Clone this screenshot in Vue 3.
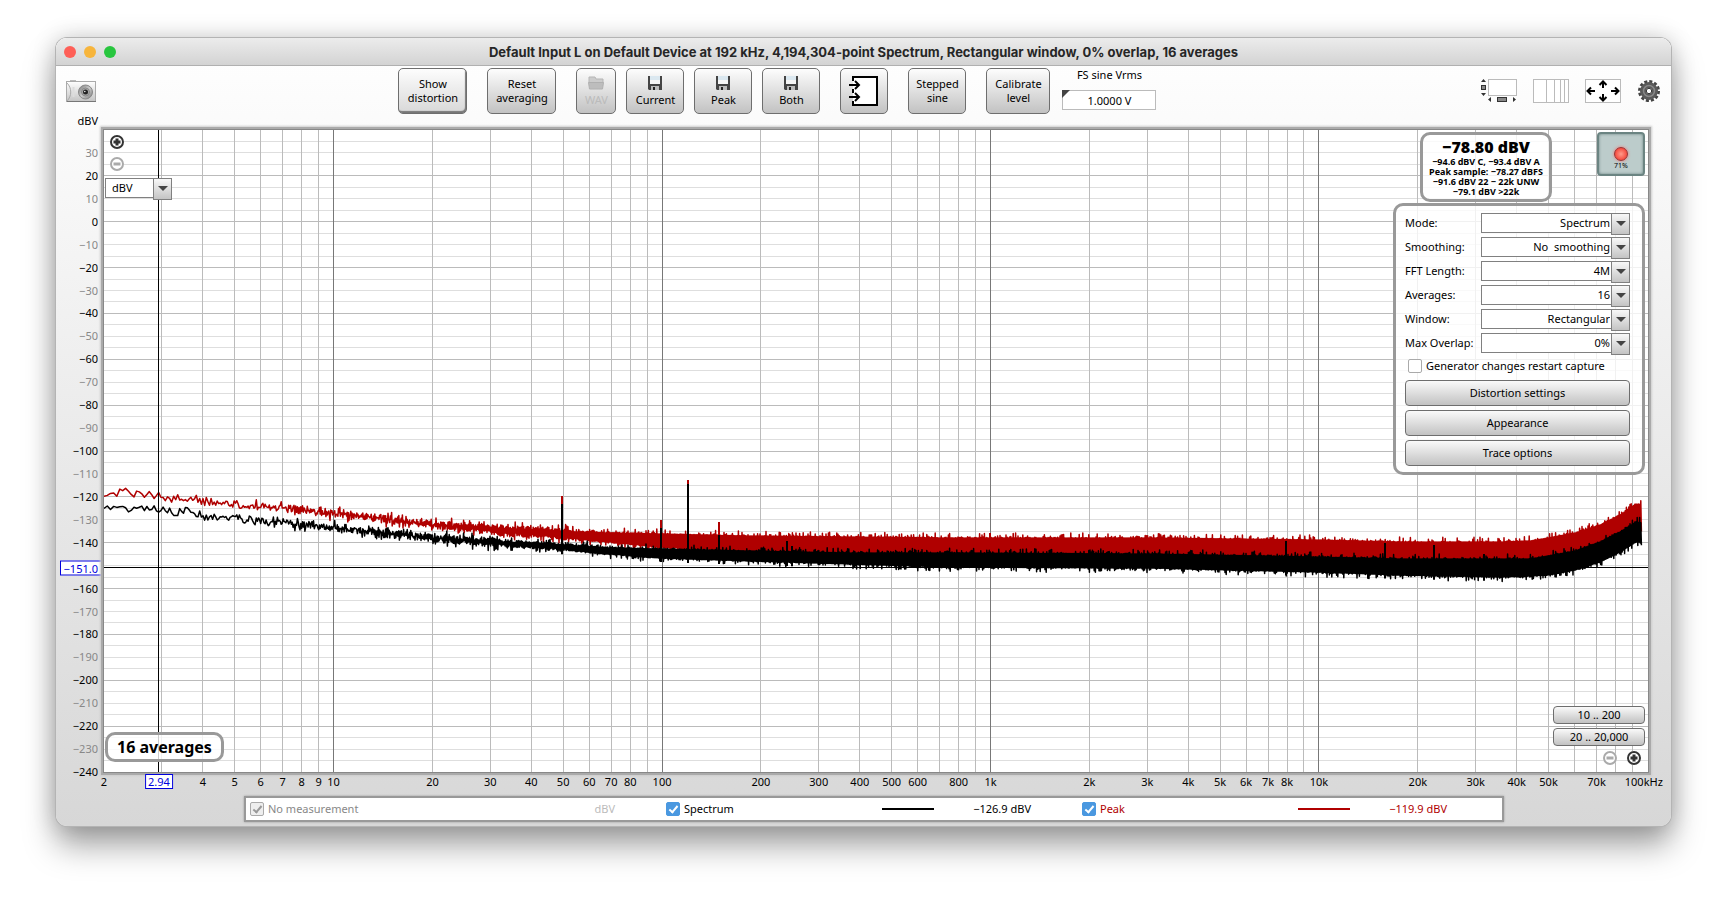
<script setup>
  import { reactive, ref } from 'vue'

  // plot ranges
  const fMin = 2
  const fMax = 100400
  const dbMax = 40
  const dbMin = -240

  const xPos = (f) => (Math.log10(f / fMin) / Math.log10(fMax / fMin)) * 100 + '%'
  const yPos = (db) => ((dbMax - db) / (dbMax - dbMin)) * 100 + '%'

  const cursor = { f: 2.94, db: -151 }

  const hLines = []
  for (let db = dbMax - 5; db > dbMin; db -= 5) {
    hLines.push({ db, major: db % 20 === 0 })
  }

  const vLines = []
  for (let decade = 1; decade <= 10000; decade *= 10) {
    for (let n = 1; n < 10; n++) {
      const f = n * decade
      if (f > fMin) vLines.push({ f, major: n === 1 })
    }
  }

  const yLabels = []
  for (let db = 30; db >= dbMin; db -= 10) {
    if (db !== -150) {
      yLabels.push({ db, text: String(db).replace('-', '−'), minor: db % 20 !== 0 })
    }
  }

  const xLabels = [
    2, 4, 5, 6, 7, 8, 9, 10, 20, 30, 40, 50, 60, 70, 80, 100, 200, 300, 400, 500, 600, 800, 1000,
    2000, 3000, 4000, 5000, 6000, 7000, 8000, 10000, 20000, 30000, 40000, 50000, 70000,
  ].map((f) => ({ f, text: f >= 1000 ? f / 1000 + 'k' : String(f) }))
  xLabels.push({ f: 97500, text: '100kHz' })

  // noise envelopes: x, peak top, peak bottom, spectrum top, spectrum bottom
  const envelope = [
    [0, 354, 367, 371, 380],
    [56, 362, 370, 375, 384],
    [96, 367, 375, 380, 390],
    [146, 371, 380, 386, 394],
    [229, 378, 388, 393, 402],
    [329, 390, 400, 403, 413],
    [396, 394, 406, 408, 418],
    [456, 398, 410, 412, 421],
    [496, 401, 413, 416, 425],
    [557, 403, 418, 418, 429],
    [646, 405, 422, 420, 432],
    [746, 406, 425, 422, 435],
    [846, 407, 426, 422, 438],
    [1046, 407, 426, 423, 439],
    [1214, 409, 429, 426, 443],
    [1296, 411, 430, 428, 446],
    [1396, 411, 431, 428, 448],
    [1426, 410, 430, 428, 447],
    [1444, 407, 428, 425, 446],
    [1471, 402, 423, 420, 441],
    [1496, 394, 414, 411, 433],
    [1516, 384, 404, 401, 423],
    [1532, 373, 395, 391, 413],
    [1538, 374, 398, 392, 413],
  ]
  const peakSpikes = [[458, 366], [557, 390], [584, 350], [615, 392], [886, 403]]
  const spectrumSpikes = [
    [458, 374], [557, 398], [584, 354], [615, 405], [683, 411], [688, 416],
    [1182, 411], [1281, 413], [1330, 415], [1380, 424],
  ]

  const level = (x, col) => {
    let i = 1
    while (i < envelope.length - 1 && envelope[i][0] < x) i++
    const a = envelope[i - 1]
    const b = envelope[i]
    return a[col] + ((b[col] - a[col]) * (x - a[0])) / (b[0] - a[0])
  }

  const trace = (top, bottom, seed) => {
    let s = seed
    const random = () => {
      s = (s * 16807) % 2147483647
      return s / 2147483647
    }
    let d = ''
    let up = false
    for (let x = 0; x <= 1538; ) {
      const hi = level(x, top)
      const lo = level(x, bottom)
      // the band fills in as more bins share a pixel
      const fill = Math.min(1, Math.max(0, (x - 100) / 450))
      const inward = random() * (1 - fill) * (lo - hi) * 0.9
      const outward = Math.pow(random(), 5) * 5 - 1
      const y = up ? hi + inward - outward : lo - inward + outward
      up = x > 100 ? !up : random() > 0.5
      d += (d ? 'L' : 'M') + x.toFixed(1) + ' ' + y.toFixed(1)
      // bins get closer together on the log axis
      x += Math.max(0.6, 3.3 * Math.pow(10, -x / 328))
    }
    return d
  }

  const peakPath = trace(1, 2, 4217)
  const spectrumPath = trace(3, 4, 9931)
  const spikePath = (spikes, col) =>
    spikes.map(([x, y]) => `M${x} ${level(x, col) + 3}V${y}`).join('')

  const settings = reactive([
    { label: 'Mode:', id: 'mode', value: 'Spectrum' },
    { label: 'Smoothing:', id: 'smoothing', value: 'No \u00a0smoothing' },
    { label: 'FFT Length:', id: 'fft', value: '4M' },
    { label: 'Averages:', id: 'averages', value: '16' },
    { label: 'Window:', id: 'window', value: 'Rectangular' },
    { label: 'Max Overlap:', id: 'overlap', value: '0%' },
  ])
  const restart = ref(false)
  const fsLevel = ref('1.0000 V')

  const legend = reactive([
    { name: 'No measurement', value: 'dBV', kind: 'none', on: true },
    { name: 'Spectrum', value: '−126.9 dBV', kind: 'spectrum', on: true },
    { name: 'Peak', value: '−119.9 dBV', kind: 'peak', on: true },
  ])
</script>

<template>
  <main class="window">
    <header class="titlebar">
      <div class="lights"><i class="close"></i><i class="minimize"></i><i class="zoom"></i></div>
      <h1>
        Default Input L on Default Device at 192 kHz, 4,194,304-point Spectrum, Rectangular window,
        0% overlap, 16 averages
      </h1>
    </header>

    <div class="toolbar">
      <button class="icon-button camera" aria-label="Capture image">
        <svg width="30" height="22" viewBox="0 0 30 22">
          <defs>
            <linearGradient id="body" x2="0" y2="1">
              <stop offset="0" stop-color="#fff" />
              <stop offset="1" stop-color="#c4c4c4" />
            </linearGradient>
            <linearGradient id="lens" x2="1" y2="1">
              <stop offset="0" stop-color="#777" />
              <stop offset="0.5" stop-color="#ccc" />
              <stop offset="1" stop-color="#777" />
            </linearGradient>
          </defs>
          <rect x="4" y="0" width="6" height="3" fill="#bbb" />
          <rect x="0.5" y="1.5" width="29" height="20" fill="url(#body)" stroke="#aaa" />
          <path d="M1 3c5 5 5 13 0 18" fill="none" stroke="#aaa" />
          <path d="M7.500 7v10" fill="none" stroke="#ddd" stroke-width="2" />
          <path d="M1 21.5h29" stroke="#777" />
          <circle cx="19.500" cy="12" r="7" fill="url(#lens)" stroke="#888" />
          <circle cx="19.500" cy="12" r="4" fill="#aaa" stroke="#888" />
          <circle cx="19.500" cy="12" r="2.500" fill="#222" />
          <circle cx="18.800" cy="11.500" r="0.800" fill="#eee" />
        </svg>
      </button>
      <div class="space left"></div>
      <button class="tool wide raised">Show<br />distortion</button>
      <button class="tool wide group">Reset<br />averaging</button>
      <button class="tool narrow group" disabled>
        <svg width="16" height="14" viewBox="0 0 16 14">
          <path d="M1 7V1h6l1 2h7v4" fill="#ccc" stroke="#b5b5b5" />
          <path d="M0.500 6.500h15l-1 6.500h-13z" fill="#bdbdbd" stroke="#b0b0b0" />
        </svg>
        WAV
      </button>
      <button v-for="name in ['Current', 'Peak', 'Both']" :key="name" class="tool save">
        <svg width="14" height="14" viewBox="0 0 14 14">
          <path d="M0 0h14v14H1l-1-1z" fill="#444" />
          <path d="M2 0h10v8H2z" fill="#dbe8f0" />
          <path d="M2 4h10v4H2z" fill="#f6f6f6" />
          <path d="M3 10h8v4H3z" fill="#bbb" />
          <path d="M5 11h2v3H5z" fill="#222" />
        </svg>
        {{ name }}
      </button>
      <button class="tool inputs group" aria-label="Inputs">
        <svg width="30" height="32" viewBox="0 0 30 32">
          <path d="M4 1.500h24.500v28H4z" fill="#fff" />
          <path d="M4 6V2h24v28H4v-4M4 14v4" fill="none" stroke="#000" stroke-width="2" />
          <path
            d="M0 10h10M6 6l4 4-4 4M0 22h10M6 18l4 4-4 4"
            fill="none"
            stroke="#000"
            stroke-width="2"
          />
        </svg>
      </button>
      <button class="tool stepped group">Stepped<br />sine</button>
      <button class="tool calibrate group">Calibrate<br />level</button>
      <div class="fs">
        <label for="fs">FS sine Vrms</label>
        <div class="fs-field"><input id="fs" v-model="fsLevel" type="text" /></div>
      </div>
      <div class="space right"></div>
      <div class="view-buttons">
        <button class="icon-button" aria-label="Scrollbars">
          <svg width="37" height="24" viewBox="0 0 37 24">
            <rect x="8.500" y="0.500" width="28" height="16" fill="#fff" stroke="#bbb" />
            <rect x="1.500" y="6.500" width="4" height="4" fill="#888" stroke="#333" />
            <rect x="17.500" y="18.500" width="9" height="4" fill="#888" stroke="#333" />
            <path
              d="M1 3h5L3.500 0zM1 14h5l-2.500 3zM11 18v5l-3-2.500zM33 18v5l3-2.500z"
              fill="#333"
            />
          </svg>
        </button>
        <button class="icon-button" aria-label="Frequency axis">
          <svg width="36" height="24" viewBox="0 0 36 24">
            <rect x="0.500" y="0.500" width="35" height="23" fill="#fff" stroke="#bbb" />
            <path d="M13.500 0v24M21.500 0v24M27.500 0v24M31.500 0v24" stroke="#bbb" />
          </svg>
        </button>
        <button class="icon-button" aria-label="Graph limits">
          <svg width="36" height="24" viewBox="0 0 36 24">
            <rect x="0.500" y="0.500" width="35" height="23" fill="#fff" stroke="#bbb" />
            <path
              d="M3 12h7M6 8.500L2.500 12 6 15.500M33 12h-7M30 8.500l3.500 3.500-3.500 3.500M18 3v6M14.500 6L18 2.500 21.500 6M18 21v-6M14.500 18l3.500 3.500 3.500-3.500"
              fill="none"
              stroke="#000"
              stroke-width="2"
            />
          </svg>
        </button>
        <button class="icon-button" aria-label="Settings">
          <svg width="24" height="24" viewBox="-12 -12 24 24">
            <circle r="9.500" fill="none" stroke="#444" stroke-width="3" stroke-dasharray="3 1.970" />
            <circle r="6" fill="none" stroke="#5a5a5a" stroke-width="6" />
            <circle r="5.500" fill="none" stroke="#888" stroke-width="1.500" />
            <circle r="2.700" fill="#fff" stroke="#333" />
          </svg>
        </button>
      </div>
    </div>

    <div class="graph">
      <div class="y-axis">
        <span class="unit">dBV</span>
        <span
          v-for="label in yLabels"
          :key="label.db"
          class="y-label"
          :class="{ minor: label.minor }"
          :style="{ top: yPos(label.db) }"
          >{{ label.text }}</span
        >
        <span class="y-cursor" :style="{ top: yPos(cursor.db) }">−151.0</span>
      </div>

      <div class="plot">
        <svg class="lines" width="100%" height="100%">
          <line
            v-for="line in hLines"
            :key="'h' + line.db"
            x1="0"
            x2="100%"
            :y1="yPos(line.db)"
            :y2="yPos(line.db)"
            :class="line.major ? 'mid' : 'light'"
          />
          <line
            v-for="line in vLines"
            :key="'v' + line.f"
            y1="0"
            y2="100%"
            :x1="xPos(line.f)"
            :x2="xPos(line.f)"
            :class="line.major ? 'dark' : 'mid'"
          />
          <svg width="100%" height="100%" viewBox="0 0 1544 642" preserveAspectRatio="none">
            <path class="peak" :d="peakPath" />
            <path class="peak spike" :d="spikePath(peakSpikes, 2)" />
            <path class="spectrum" :d="spectrumPath" />
            <path class="spectrum spike" :d="spikePath(spectrumSpikes, 4)" />
          </svg>
          <line x1="0" x2="100%" :y1="yPos(cursor.db)" :y2="yPos(cursor.db)" class="cursor" />
          <line y1="0" y2="100%" :x1="xPos(cursor.f)" :x2="xPos(cursor.f)" class="cursor" />
        </svg>

        <div class="top-left">
          <button class="round" aria-label="Zoom in vertically">
            <svg width="14" height="14" viewBox="0 0 14 14">
              <circle cx="7" cy="7" r="6" />
              <path d="M3.500 7h7M7 3.500v7" />
            </svg>
          </button>
          <button class="round off" aria-label="Zoom out vertically">
            <svg width="14" height="14" viewBox="0 0 14 14">
              <circle cx="7" cy="7" r="6" />
              <path d="M3.500 7h7" />
            </svg>
          </button>
          <span class="drop unit-drop">
            <select aria-label="Y axis unit">
              <option>dBV</option>
            </select>
          </span>
        </div>

        <div class="averages box">16 averages</div>

        <div class="readout box">
          <strong>−78.80 dBV</strong>
          <span>−94.6 dBV C, −93.4 dBV A</span>
          <span>Peak sample: −78.27 dBFS</span>
          <span>−91.6 dBV 22 − 22k UNW</span>
          <span>−79.1 dBV &gt;22k</span>
        </div>

        <button class="record"><i></i>71%</button>

        <form class="settings box" @submit.prevent>
          <div v-for="item in settings" :key="item.id" class="row">
            <label :for="item.id">{{ item.label }}</label>
            <span class="drop">
              <select :id="item.id" v-model="item.value">
                <option>{{ item.value }}</option>
              </select>
            </span>
          </div>
          <label class="restart">
            <input v-model="restart" type="checkbox" />
            Generator changes restart capture
          </label>
          <button class="wide-button">Distortion settings</button>
          <button class="wide-button">Appearance</button>
          <button class="wide-button">Trace options</button>
        </form>

        <div class="ranges">
          <button class="range">10 .. 200</button>
          <button class="range">20 .. 20,000</button>
          <div class="range-zoom">
            <button class="round off" aria-label="Zoom out">
              <svg width="14" height="14" viewBox="0 0 14 14">
                <circle cx="7" cy="7" r="6" />
                <path d="M3.500 7h7" />
              </svg>
            </button>
            <button class="round" aria-label="Zoom in">
              <svg width="14" height="14" viewBox="0 0 14 14">
                <circle cx="7" cy="7" r="6" />
                <path d="M3.500 7h7M7 3.500v7" />
              </svg>
            </button>
          </div>
        </div>
      </div>
    </div>

    <div class="x-axis">
      <span
        v-for="label in xLabels"
        :key="label.f"
        class="x-label"
        :style="{ left: xPos(label.f) }"
        >{{ label.text }}</span
      >
      <span class="x-cursor" :style="{ left: xPos(cursor.f) }">2.94</span>
    </div>

    <div class="legend">
      <div v-for="item in legend" :key="item.name" class="entry" :class="item.kind">
        <label>
          <input v-model="item.on" type="checkbox" :disabled="item.kind === 'none'" />
          {{ item.name }}
        </label>
        <i class="swatch"></i>
        <span class="value">{{ item.value }}</span>
      </div>
    </div>
  </main>
</template>

<style>
  body {
    margin: 0;
    background-color: #fff;
  }
  #app {
    display: flex;
    min-height: 100vh;
    box-sizing: border-box;
    padding: 38px 56px 74px;
  }
</style>

<style scoped>
  * {
    box-sizing: border-box;
  }
  .window,
  button,
  input,
  select {
    font-family: 'Noto Sans', 'Open Sans', sans-serif;
    font-size: 11px;
    line-height: 14px;
    color: #000;
  }
  .window {
    flex: 1;
    min-width: 0;
    display: flex;
    flex-direction: column;
    border-radius: 11px;
    background: linear-gradient(#fff, #d7d7d7);
    box-shadow:
      0 0 0 1px #b4b4b4,
      0 0 24px rgba(0, 0, 0, 0.2),
      0 20px 32px rgba(0, 0, 0, 0.35);
  }

  .titlebar {
    display: flex;
    align-items: center;
    height: 28px;
    padding: 0 8px;
    border-bottom: 1px solid #b0b0b0;
    border-radius: 11px 11px 0 0;
    background: linear-gradient(#ececec, #d3d3d3);
  }
  .titlebar h1 {
    flex: 1;
    margin: 0 60px 0 0;
    text-align: center;
    white-space: nowrap;
    font: bold 13px/16px Inter, sans-serif;
    color: #262626;
  }
  .lights {
    display: flex;
    gap: 8px;
    width: 60px;
  }
  .lights i {
    width: 12px;
    height: 12px;
    border-radius: 50%;
  }
  .close {
    background-color: #fe5f57;
  }
  .minimize {
    background-color: #f7b53c;
  }
  .zoom {
    background-color: #28c63f;
  }

  .toolbar {
    display: flex;
    align-items: flex-start;
    height: 61px;
    padding: 2px 10px 0;
  }
  .space.left {
    flex: 302;
  }
  .space.right {
    flex: 323;
  }
  .icon-button {
    display: flex;
    padding: 0;
    border: 0;
    background: none;
  }
  .camera {
    margin-top: 12px;
  }
  .tool {
    display: flex;
    flex-direction: column;
    align-items: center;
    justify-content: center;
    gap: 3px;
    height: 46px;
    margin-left: 10px;
    padding: 0;
    border: 1px solid #6e6e6e;
    border-radius: 5px;
    background: linear-gradient(#fdfdfd, #c2c2c2);
  }
  .group {
    margin-left: 20px;
  }
  .wide {
    display: block;
    width: 69px;
  }
  .raised {
    margin-left: 0;
    background: linear-gradient(#fdfdfd, #d8d8d8);
    box-shadow: inset -1px -2px 1px #777;
  }
  .narrow {
    width: 40px;
  }
  .save,
  .stepped {
    width: 58px;
  }
  .inputs {
    width: 48px;
  }
  .stepped,
  .calibrate {
    display: block;
  }
  .calibrate {
    width: 64px;
  }
  .tool:disabled {
    color: #bbb;
  }
  .fs {
    display: flex;
    flex-direction: column;
    align-items: center;
    gap: 8px;
    width: 94px;
    margin-left: 12px;
  }
  .fs-field {
    position: relative;
  }
  .fs-field::before {
    content: '';
    position: absolute;
    border: 4px solid #444;
    border-right-color: transparent;
    border-bottom-color: transparent;
  }
  .fs-field input {
    display: block;
    width: 94px;
    height: 20px;
    padding: 0;
    border: 1px solid #bbb;
    background: #fff;
    text-align: center;
  }
  .view-buttons {
    display: flex;
    gap: 16px;
    margin-top: 11px;
  }

  .graph {
    flex: 1;
    display: flex;
    min-height: 480px;
    padding-right: 23px;
  }
  .y-axis {
    position: relative;
    width: 48px;
    margin: 3px 0;
  }
  .y-axis span {
    position: absolute;
    right: 6px;
    transform: translateY(-50%);
  }
  .y-axis .unit {
    top: -9px;
  }
  .minor {
    color: #888;
  }
  .y-axis .y-cursor {
    right: 2px;
    padding: 0 3px;
    border: 1px solid #00d;
    background-color: #fff;
    line-height: 13px;
    color: #00d;
  }
  .plot {
    position: relative;
    flex: 1;
    margin: 3px 0;
    background-color: #fff;
    box-shadow:
      0 0 0 1px #888,
      0 0 0 3px #aaa,
      0 0 2px 4px #ccc;
  }
  .lines {
    position: absolute;
    inset: 0;
  }
  .lines line {
    shape-rendering: crispEdges;
  }
  .light {
    stroke: #dedede;
  }
  .mid {
    stroke: #bbb;
  }
  .dark {
    stroke: #777;
  }
  .cursor {
    stroke: #000;
  }
  path.peak,
  path.spectrum {
    fill: none;
    stroke: #b00000;
    stroke-width: 1.5;
    stroke-linejoin: round;
  }
  path.spectrum {
    stroke: #000;
  }
  path.spike {
    stroke-width: 2;
  }

  .top-left {
    position: absolute;
    top: 5px;
    left: 1px;
    display: flex;
    flex-direction: column;
    align-items: flex-start;
    gap: 8px;
  }
  .round {
    display: flex;
    margin-left: 5px;
    padding: 0;
    border: 0;
    border-radius: 50%;
    background: #fff;
  }
  .round svg {
    fill: none;
    stroke: #333;
    stroke-width: 2;
  }
  .round path {
    stroke-width: 3;
  }
  .round.off svg {
    stroke: #aaa;
  }
  .drop {
    position: relative;
    display: block;
  }
  .drop::before {
    content: '';
    position: absolute;
    top: 0;
    right: 0;
    width: 17px;
    height: 20px;
    border: 1px solid #808080;
    background: linear-gradient(#f8f8f8, #c4c4c4);
    pointer-events: none;
  }
  .drop::after {
    content: '';
    position: absolute;
    top: 8px;
    right: 4px;
    border: 5px solid transparent;
    border-top-color: #444;
    border-bottom: 0;
    pointer-events: none;
  }
  .drop select {
    display: block;
    width: 100%;
    height: 20px;
    padding: 0 19px 0 6px;
    border: 1px solid #808080;
    border-radius: 0;
    background: #fff;
    appearance: none;
  }
  .unit-drop {
    width: 67px;
    margin-top: -1px;
  }

  .box {
    position: absolute;
    border: 3px solid #999;
    border-radius: 10px;
    background-color: rgba(255, 255, 255, 0.8);
  }
  .averages {
    bottom: 10px;
    left: 1px;
    padding: 2px 9px;
    font-size: 16px;
    font-weight: bold;
    line-height: 20px;
  }
  .readout {
    top: 2px;
    right: 96px;
    display: flex;
    flex-direction: column;
    align-items: center;
    width: 132px;
    height: 70px;
    padding-top: 2px;
    font-size: 9px;
    font-weight: bold;
    line-height: 10px;
    white-space: nowrap;
  }
  .readout strong {
    font-size: 16px;
    line-height: 20px;
  }
  .record {
    position: absolute;
    top: 2px;
    right: 3px;
    display: flex;
    flex-direction: column;
    align-items: center;
    justify-content: flex-end;
    width: 48px;
    height: 44px;
    padding: 0 0 4px;
    border: 2px solid #6b8482;
    border-radius: 4px;
    background: #bccccb;
    box-shadow: inset 0 0 3px #6b8482;
    font-size: 7px;
    line-height: 9px;
  }
  .record i {
    width: 14px;
    height: 14px;
    border: 1px solid #933;
    border-radius: 50%;
    background: radial-gradient(#ff9a8a, #f02a20);
    box-shadow: 0 0 3px #f66;
  }

  .settings {
    top: 73px;
    right: 3px;
    display: flex;
    flex-direction: column;
    gap: 4px;
    width: 252px;
    padding: 7px 12px 6px 9px;
  }
  .row {
    display: grid;
    grid-template-columns: 1fr 149px;
    align-items: center;
    white-space: nowrap;
  }
  .settings select {
    padding-right: 19px;
    text-align-last: right;
  }
  input[type='checkbox'] {
    display: grid;
    place-items: center;
    flex: none;
    width: 14px;
    height: 14px;
    margin: 0;
    border: 1px solid #aaa;
    border-radius: 2px;
    background: #fff;
    appearance: none;
  }
  input[type='checkbox']:checked {
    border-color: #4a98e0;
    background: #4a98e0;
  }
  input[type='checkbox']:checked::after {
    content: '';
    width: 3px;
    height: 7px;
    margin-bottom: 2px;
    border: solid #fff;
    border-width: 0 2px 2px 0;
    transform: rotate(40deg);
  }
  input[type='checkbox']:disabled {
    border-color: #aaa;
    background: #eee;
  }
  input[type='checkbox']:disabled::after {
    border-color: #999;
  }
  .restart {
    display: flex;
    align-items: center;
    gap: 4px;
    height: 18px;
    margin: 0 0 1px 3px;
    white-space: nowrap;
  }
  .wide-button,
  .range {
    height: 26px;
    padding: 0;
    border: 1px solid #6e6e6e;
    border-radius: 4px;
    background: linear-gradient(#fafafa, #c2c2c2);
  }

  .ranges {
    position: absolute;
    right: 3px;
    bottom: 7px;
    display: flex;
    flex-direction: column;
    gap: 4px;
    width: 92px;
  }
  .range {
    height: 18px;
  }
  .range-zoom {
    display: flex;
    justify-content: flex-end;
    gap: 5px;
    padding: 1px 4px 0 0;
  }

  .x-axis {
    position: relative;
    height: 21px;
    margin: 0 23px 0 48px;
  }
  .x-axis span {
    position: absolute;
    top: 0;
    transform: translateX(-50%);
    white-space: nowrap;
  }
  .x-axis .x-cursor {
    top: -1px;
    padding: 0 2px;
    border: 1px solid #00d;
    background-color: #fff;
    line-height: 13px;
    color: #00d;
  }

  .legend {
    display: grid;
    grid-template-columns: repeat(3, 1fr);
    align-items: center;
    height: 26px;
    margin: 0 167px 4px 188px;
    padding: 0 4px;
    border: 2px solid #999;
    background-color: #fff;
    box-shadow: 0 0 2px #999;
  }
  .entry {
    display: flex;
    align-items: center;
  }
  .entry label {
    display: flex;
    align-items: center;
    gap: 4px;
    width: 216px;
  }
  .swatch {
    width: 52px;
    height: 2px;
  }
  .value {
    flex: 1;
    margin-right: 51px;
    text-align: right;
  }
  .entry.none {
    color: #888;
  }
  .entry.none .value {
    color: #bbb;
  }
  .entry.peak {
    color: #b00000;
  }
  .spectrum .swatch {
    background-color: #000;
  }
  .peak .swatch {
    background-color: #b00000;
  }
</style>
